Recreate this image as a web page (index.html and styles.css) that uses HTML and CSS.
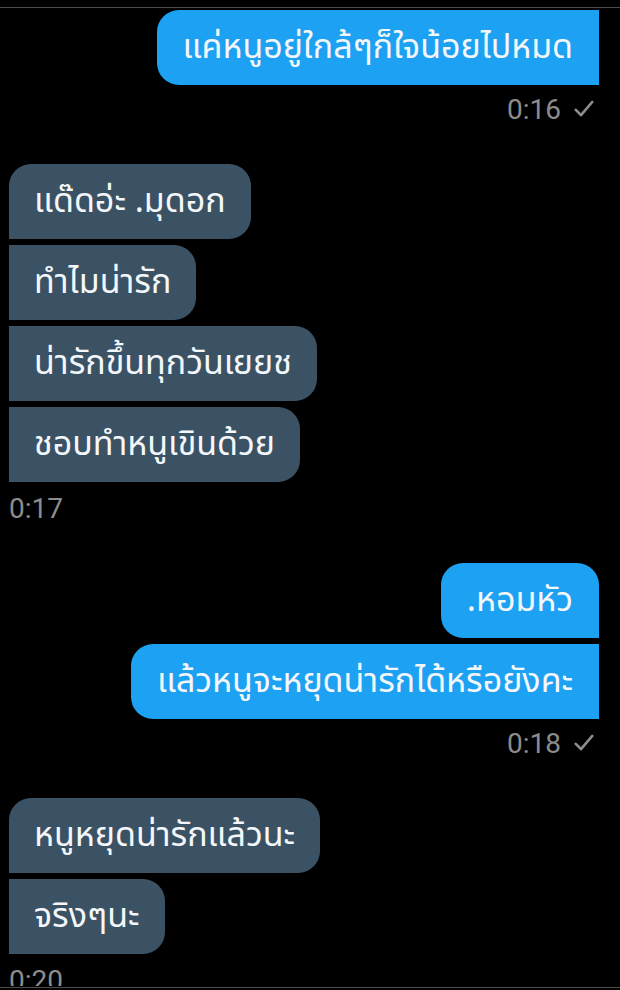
FILE: index.html
```html
<!DOCTYPE html>
<html lang="th">
<head>
<meta charset="utf-8">
<link rel="stylesheet" href="styles.css">
</head>
<body>
<div class="screen">
  <div class="chat">
    <div class="row sent">
      <div class="bubble out first-only">แค่หนูอยู่ใกล้ๆก็ใจน้อยไปหมด</div>
      <div class="meta out-meta"><span>0:16</span><svg class="tick" viewBox="0 0 20 18" width="20" height="18"><path d="M1.8 9.8 L7 15.2 L18.2 2" fill="none" stroke="#8e8e8e" stroke-width="2.6" stroke-linecap="round" stroke-linejoin="round"/></svg></div>
    </div>

    <div class="row recv gap-top">
      <div class="bubble in first">แด๊ดอ่ะ .มุดอก</div>
      <div class="bubble in">ทำไมน่ารัก</div>
      <div class="bubble in">น่ารักขึ้นทุกวันเยยช</div>
      <div class="bubble in">ชอบทำหนูเขินด้วย</div>
      <div class="meta in-meta"><span>0:17</span></div>
    </div>

    <div class="row sent gap-top">
      <div class="bubble out first">.หอมหัว</div>
      <div class="bubble out">แล้วหนูจะหยุดน่ารักได้หรือยังคะ</div>
      <div class="meta out-meta"><span>0:18</span><svg class="tick" viewBox="0 0 20 18" width="20" height="18"><path d="M1.8 9.8 L7 15.2 L18.2 2" fill="none" stroke="#8e8e8e" stroke-width="2.6" stroke-linecap="round" stroke-linejoin="round"/></svg></div>
    </div>

    <div class="row recv gap-top">
      <div class="bubble in first">หนูหยุดน่ารักแล้วนะ</div>
      <div class="bubble in">จริงๆนะ</div>
      <div class="meta in-meta"><span>0:20</span></div>
    </div>
  </div>
  <div class="bottom-line"></div>
</div>
</body>
</html>
```

FILE: styles.css
```css
html, body {
  margin: 0;
  padding: 0;
  background: #000;
}
body {
  width: 620px;
  height: 990px;
  overflow: hidden;
  font-family: "Noto Sans Thai", "Noto Sans", "Roboto", sans-serif;
}
.screen {
  position: relative;
  height: 990px;
  padding-top: 7px;
  box-sizing: border-box;
}
.chat {
  border-top: 1px solid #4c4c4c;
  height: 979px;
  overflow: hidden;
  padding: 2px 21px 0 9px;
  box-sizing: border-box;
  display: flex;
  flex-direction: column;
}
.row {
  display: flex;
  flex-direction: column;
  gap: 6px;
}
.row.sent { align-items: flex-end; }
.row.recv { align-items: flex-start; }
.gap-top { margin-top: 40px; }
.bubble {
  height: 75px;
  display: flex;
  align-items: center;
  padding: 0 25px;
  box-sizing: border-box;
  color: #f4f7fa;
  font-size: 34px;
  white-space: nowrap;
}
.bubble.out {
  background: #1da1f2;
  border-radius: 22px 0 0 22px;
  padding: 0 26px;
}
.bubble.out.first { border-radius: 22px 22px 0 22px; }
.bubble.in {
  background: #3b5265;
  border-radius: 0 22px 22px 0;
}
.bubble.in.first { border-radius: 22px 22px 22px 0; }
.meta {
  display: flex;
  align-items: center;
  gap: 13px;
  height: 30px;
  margin-top: 3px;
  color: #8c8c8c;
  font-family: "Roboto", "Noto Sans", sans-serif;
  font-size: 28px;
}
.out-meta { padding-right: 5px; }
.in-meta { margin-top: 5px; }
.tick { display: block; }
.bottom-line {
  position: absolute;
  left: 0;
  right: 0;
  top: 987px;
  height: 1px;
  background: #4c4c4c;
}
```
